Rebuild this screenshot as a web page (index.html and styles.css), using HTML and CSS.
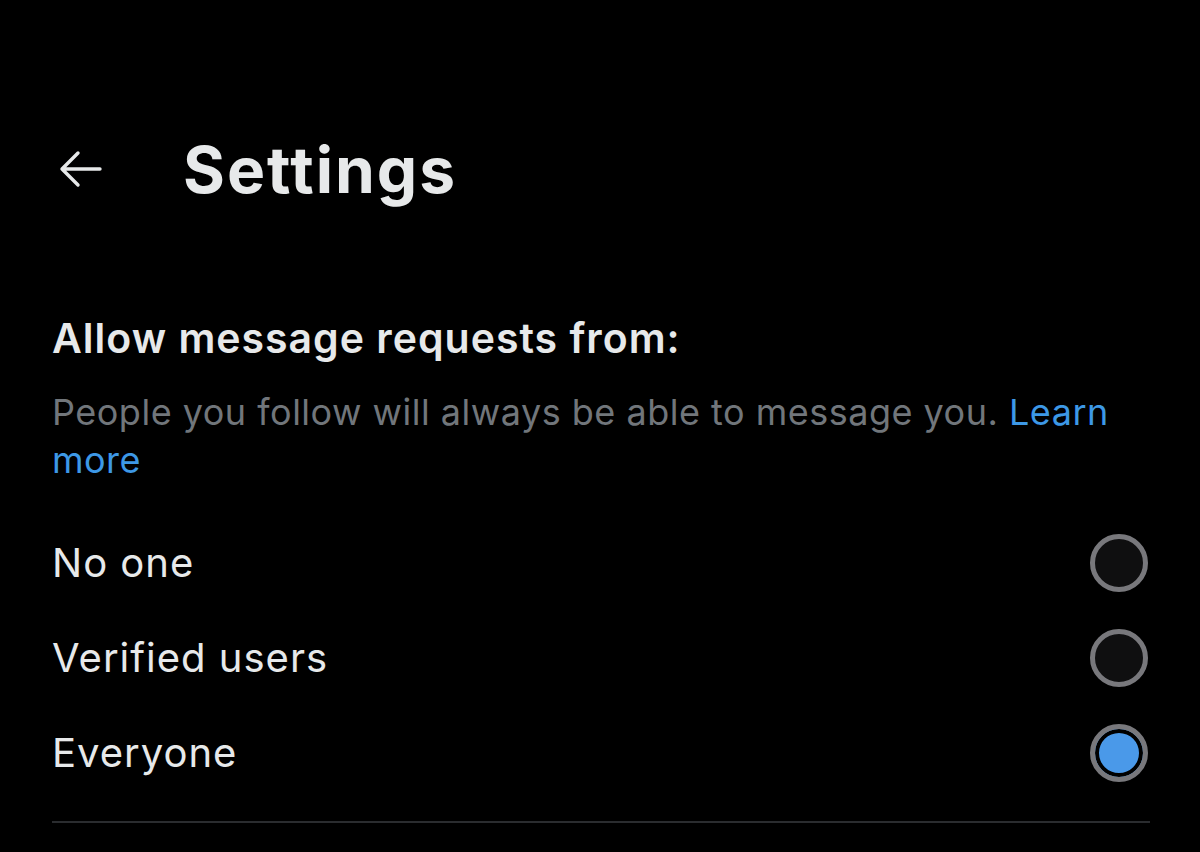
FILE: index.html
```html
<!DOCTYPE html>
<html>
<head>
    <title>Settings</title>
    <link rel="stylesheet" href="styles.css">
</head>
<body>
<header class="topbar">
    <button class="back" aria-label="Back">
        <svg viewBox="0 0 44 40" width="44" height="40">
            <path d="M42 20H4M20 4L4 20l16 16" fill="none" stroke="#e7e9ea" stroke-width="3.4" stroke-linecap="round" stroke-linejoin="round"/>
        </svg>
    </button>
    <h1 class="title">Settings</h1>
</header>

<section class="dm-settings">
    <h2 class="heading">Allow message requests from:</h2>
    <p class="hint">People you follow will always be able to message you. <a href="#">Learn more</a></p>

    <form class="choices">
        <label class="choice">
            <span>No one</span>
            <input type="radio" name="allow" value="none">
            <i class="dot"></i>
        </label>
        <label class="choice">
            <span>Verified users</span>
            <input type="radio" name="allow" value="verified">
            <i class="dot"></i>
        </label>
        <label class="choice">
            <span>Everyone</span>
            <input type="radio" name="allow" value="all" checked>
            <i class="dot"></i>
        </label>
    </form>
    <hr class="divider">
</section>
</body>
</html>
```

FILE: styles.css
```css
body {
    margin: 0;
    background: #000;
    color: #e7e9ea;
    font-family: Inter, "Noto Sans", sans-serif;
}

.topbar {
    display: flex;
    align-items: center;
    height: 130px;
    padding: 104px 0 0 58px;
}

.back {
    background: none;
    border: 0;
    padding: 0;
    width: 125px;
    text-align: left;
    line-height: 0;
}

.title {
    margin: 0;
    font-size: 64px;
    font-weight: 700;
    letter-spacing: 2px;
}

.dm-settings {
    padding: 0 50px 0 52px;
}

.heading {
    margin: 80px 0 0;
    font-size: 41px;
    font-weight: 600;
    line-height: 48px;
    letter-spacing: 1px;
}

.hint {
    margin: 26px 0 0;
    font-size: 36px;
    line-height: 48px;
    letter-spacing: 0.5px;
    color: #71767b;
}

.hint a {
    color: #3d98e6;
    text-decoration: none;
}

.choices {
    margin-top: 31px;
}

.choice {
    display: flex;
    align-items: center;
    justify-content: space-between;
    height: 95px;
    font-size: 40px;
    letter-spacing: 1px;
}

.choice input {
    display: none;
}

.dot {
    width: 48px;
    height: 48px;
    margin-right: 2px;
    border-radius: 50%;
    border: 5px solid #78787c;
    background: #0f0f10;
}

input:checked + .dot {
    background: #4a99e9;
    box-shadow: inset 0 0 0 4px #000;
}

.divider {
    margin: 21px 0 0;
    border: 0;
    border-top: 2px solid #2a2c2f;
}
```
